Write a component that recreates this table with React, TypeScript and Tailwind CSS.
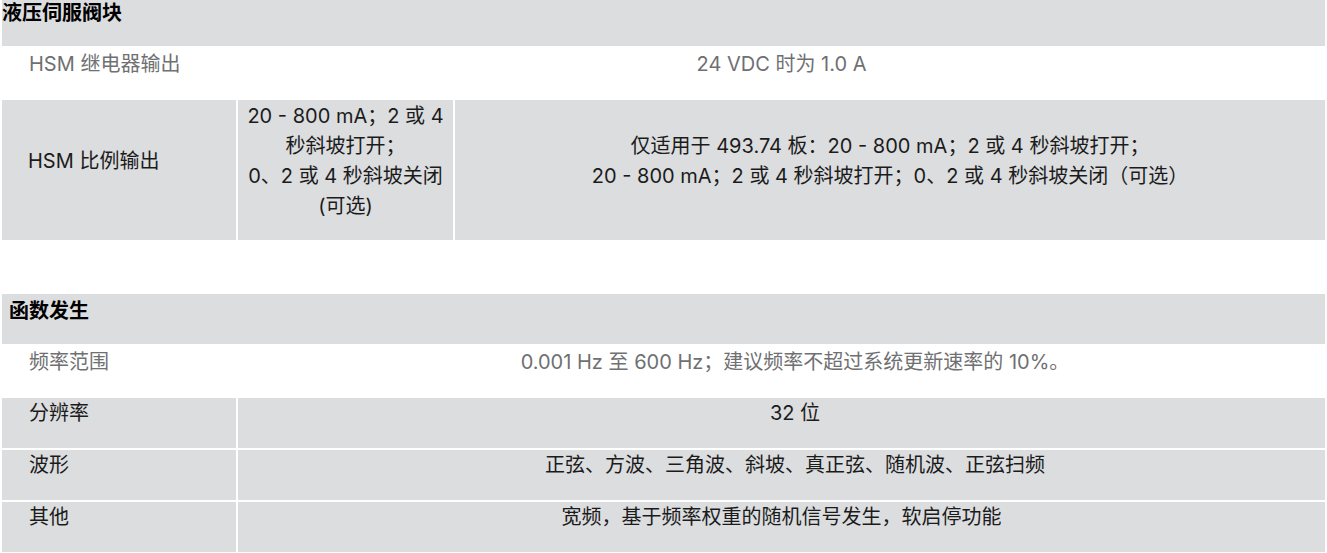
const font = { fontFamily: '"Inter", "Noto Sans CJK SC", sans-serif' }

function Header({ title, className }: { title: string; className: string }) {
  return (
    <div className={`bg-[#dcdddf] font-bold text-[20px] leading-[30px] text-black ${className}`}>
      {title}
    </div>
  )
}

/** White row: label in gray on the left, value centered across the rest. */
function PlainRow({ label, value, shift }: { label: string; value: string; shift?: boolean }) {
  return (
    <div className="flex h-[54px] pt-[3px] text-[#6f7072]">
      <div className="w-[236px] shrink-0 pl-[27px]">{label}</div>
      <div className={`flex-1 text-center ${shift ? 'pl-[27px]' : ''}`}>{value}</div>
    </div>
  )
}

function GrayRow({ label, value, shift = true }: { label: string; value: string; shift?: boolean }) {
  return (
    <div className="flex h-[50px] gap-[2px] text-[#1b1b1b]">
      <div className="w-[234px] shrink-0 bg-[#dcdddf] pl-[27px]">{label}</div>
      <div className={`flex-1 bg-[#dcdddf] text-center ${shift ? 'pl-[27px]' : ''}`}>{value}</div>
    </div>
  )
}

export default function App() {
  return (
    <div className="bg-white w-[1327px] h-[553px] overflow-hidden text-[20px] leading-[30px]" style={font}>
      <div className="mx-[2px] flex flex-col">
        <Header title="液压伺服阀块" className="h-[48px] -mt-[2px] pt-0" />
        <PlainRow label="HSM 继电器输出" value="24 VDC 时为 1.0 A" />
        <div className="flex h-[140px] gap-[2px] text-[#1b1b1b]">
          <div className="w-[234px] shrink-0 bg-[#dcdddf] pl-[26px] pb-[19px] flex items-center">
            HSM 比例输出
          </div>
          <div className="w-[215px] shrink-0 bg-[#dcdddf] pb-[19px] flex flex-col justify-center text-center">
            <div>20 - 800 mA；2 或 4</div>
            <div>秒斜坡打开；</div>
            <div>0、2 或 4 秒斜坡关闭</div>
            <div>(可选)</div>
          </div>
          <div className="flex-1 bg-[#dcdddf] pb-[19px] flex flex-col justify-center text-center">
            <div>仅适用于 493.74 板：20 - 800 mA；2 或 4 秒斜坡打开；</div>
            <div>20 - 800 mA；2 或 4 秒斜坡打开；0、2 或 4 秒斜坡关闭（可选）</div>
          </div>
        </div>

        <div className="h-[54px]" />

        <Header title="函数发生" className="h-[50px] pt-[2px] pl-[7px]" />
        <PlainRow label="频率范围" value="0.001 Hz 至 600 Hz；建议频率不超过系统更新速率的 10%。" shift />
        <div className="flex flex-col gap-[2px]">
          <GrayRow label="分辨率" value="32 位" />
          <GrayRow label="波形" value="正弦、方波、三角波、斜坡、真正弦、随机波、正弦扫频" />
          <GrayRow label="其他" value="宽频，基于频率权重的随机信号发生，软启停功能" shift={false} />
        </div>
      </div>
    </div>
  )
}
